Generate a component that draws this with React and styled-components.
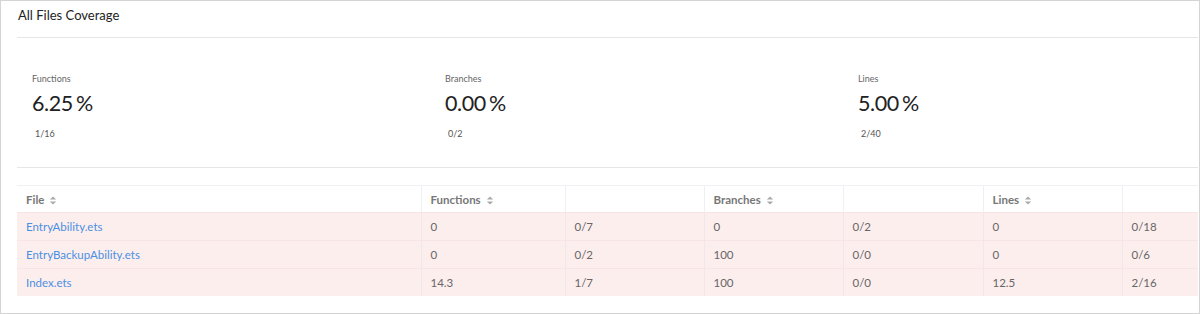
import React from "react";
import styled, { createGlobalStyle } from "styled-components";

const Global = createGlobalStyle`
  html, body { margin: 0; padding: 0; background: #fff; }
  body { font-family: Lato, "Noto Sans", sans-serif; color: #333; }
`;

const Frame = styled.div`
  box-sizing: border-box;
  width: 1200px;
  height: 314px;
  border: 1px solid #d4d4d4;
  padding: 0 1px 0 16px;
  overflow: hidden;
`;

const Title = styled.h3`
  margin: 0;
  padding: 6px 0 0 1px;
  height: 37px;
  box-sizing: border-box;
  font-size: 13px;
  font-weight: 400;
  color: #222;
  border-bottom: 1px solid #e6e6e6;
`;

const Stats = styled.div`
  display: flex;
  padding: 35px 0 0 15px;
  height: 130px;
  box-sizing: border-box;
  border-bottom: 1px solid #e6e6e6;
`;

const Stat = styled.div`
  width: 413px;
  flex: none;
`;

const StatLabel = styled.div`
  font-size: 9px;
  color: #666;
  line-height: 12px;
`;

const StatValue = styled.div`
  font-size: 21.5px;
  line-height: 28px;
  margin-top: 4px;
  color: #222;
  font-weight: 400;
  letter-spacing: -0.4px;
`;

const Pct = styled.span`
  margin-left: 3px;
`;

const StatCount = styled.div`
  font-size: 9px;
  color: #555;
  margin: 11px 0 0 3px;
`;

const Table = styled.table`
  margin-top: 17px;
  width: 100%;
  border-collapse: collapse;
  table-layout: fixed;
  font-size: 11.5px;
  border-top: 1px solid #eef0f3;
`;

const Th = styled.th`
  text-align: left;
  font-weight: 700;
  color: #777;
  height: 26px;
  padding: 0 0 0 9px;
  border-left: 1px solid #eef0f3;
  &:first-child { border-left: none; }
`;

const Tr = styled.tr`
  background: #fdeeee;
  border-top: 1px solid #f6e4e6;
`;

const Td = styled.td`
  color: #666;
  height: 27px;
  padding: 0 0 0 9px;
  border-left: 1px solid #f2e6ea;
  &:first-child { border-left: none; }
`;

const FileLink = styled.a`
  color: #4a90e2;
  text-decoration: none;
`;

const SortSvg = styled.svg`
  margin-left: 5px;
  vertical-align: -1px;
`;

const SortIcon = () => (
  <SortSvg width="8" height="9" viewBox="0 0 8 9">
    <path d="M4 0.5 L7.2 3.6 H0.8 Z M4 8.5 L7.2 5.4 H0.8 Z" fill="#aaa" />
  </SortSvg>
);

const stats = [
  { label: "Functions", value: "6.25", count: "1/16" },
  { label: "Branches", value: "0.00", count: "0/2" },
  { label: "Lines", value: "5.00", count: "2/40" },
];

const rows = [
  ["EntryAbility.ets", "0", "0/7", "0", "0/2", "0", "0/18"],
  ["EntryBackupAbility.ets", "0", "0/2", "100", "0/0", "0", "0/6"],
  ["Index.ets", "14.3", "1/7", "100", "0/0", "12.5", "2/16"],
];

const widths = [404, 144, 139, 139, 140, 139, 76];

export default function App() {
  return (
    <>
      <Global />
      <Frame>
        <Title>All Files Coverage</Title>
        <Stats>
          {stats.map((s) => (
            <Stat key={s.label}>
              <StatLabel>{s.label}</StatLabel>
              <StatValue>{s.value}<Pct>%</Pct></StatValue>
              <StatCount>{s.count}</StatCount>
            </Stat>
          ))}
        </Stats>
        <Table>
          <colgroup>
            {widths.map((w, i) => <col key={i} style={{ width: w }} />)}
          </colgroup>
          <thead>
            <tr>
              <Th>File<SortIcon /></Th>
              <Th>Functions<SortIcon /></Th>
              <Th />
              <Th>Branches<SortIcon /></Th>
              <Th />
              <Th>Lines<SortIcon /></Th>
              <Th />
            </tr>
          </thead>
          <tbody>
            {rows.map((r) => (
              <Tr key={r[0]}>
                <Td><FileLink href="#">{r[0]}</FileLink></Td>
                {r.slice(1).map((c, i) => <Td key={i}>{c}</Td>)}
              </Tr>
            ))}
          </tbody>
        </Table>
      </Frame>
    </>
  );
}
